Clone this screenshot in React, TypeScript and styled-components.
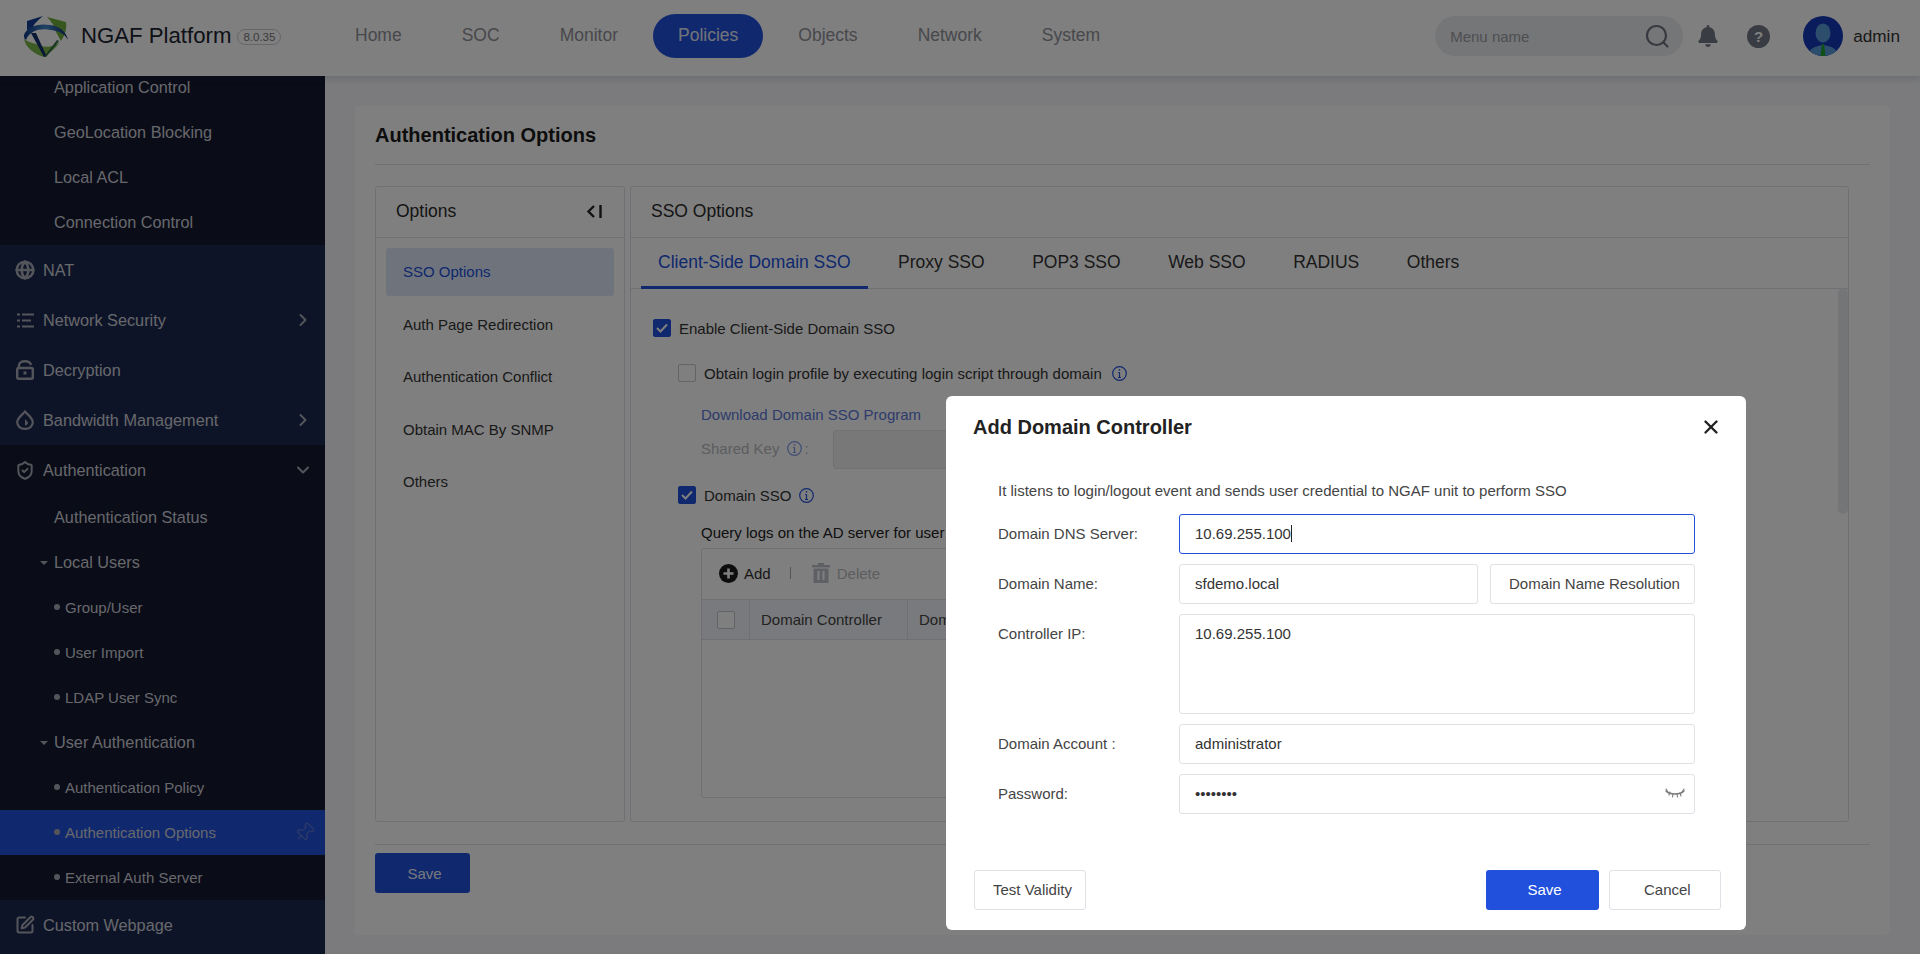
import React from "react";
import styled, { createGlobalStyle } from "styled-components";
import { ChevronDown, ChevronRight, Globe, Pin, ShieldCheck, SquarePen, X } from "lucide-react";
import { FaBell } from "react-icons/fa";

const blue = "#2050dc";
const line = "#dfe1e6";

const GlobalStyle = createGlobalStyle`
  html, body { margin: 0; padding: 0; background: #f6f7fa; }
  * { box-sizing: border-box; }
  body { font-family: "Liberation Sans", Arial, sans-serif; color: #333; }
`;

const Page = styled.div`
  position: relative;
  width: 1920px;
  height: 954px;
  overflow: hidden;
  display: flex;
  flex-direction: column;
`;

/* top bar */
const Header = styled.header`
  position: relative;
  z-index: 2;
  height: 76px;
  flex: none;
  padding-bottom: 4px;
  display: flex;
  align-items: center;
  background: #fff;
  box-shadow: 0 2px 8px rgba(40, 50, 70, 0.18);
`;

const Brand = styled.div`
  width: 330px;
  flex: none;
  padding-left: 23px;
  display: flex;
  align-items: center;
  color: #1c2230;
  font-size: 22.2px;
`;

const BrandName = styled.span`
  margin-left: 12px;
`;

const Version = styled.span`
  margin: 2px 0 0 6px;
  padding: 0 5px;
  height: 16px;
  line-height: 14px;
  border: 1px solid #c9ccd2;
  border-radius: 8px;
  font-size: 11.5px;
  color: #777;
`;

const Nav = styled.nav`
  display: flex;
  gap: 10px;
`;

const NavItem = styled.a<{ $active?: boolean }>`
  height: 44px;
  line-height: 42px;
  padding: 0 25px;
  border-radius: 22px;
  font-size: 17.5px;
  color: ${(p) => (p.$active ? "#e4e8f4" : "#8f9198")};
  background: ${(p) => (p.$active ? blue : "transparent")};
`;

const HeaderRight = styled.div`
  margin-left: auto;
  display: flex;
  align-items: center;
  padding-right: 20px;
`;

const Search = styled.div`
  width: 248px;
  height: 40px;
  border-radius: 20px;
  background: #eaecf0;
  display: flex;
  align-items: center;
  justify-content: space-between;
  padding: 0 14px 0 15px;
  font-size: 15px;
  color: #9c9ea4;
`;

const HelpDot = styled.span`
  width: 23px;
  height: 23px;
  margin-left: 28px;
  margin-right: 33px;
  border-radius: 50%;
  background: #747886;
  color: #fff;
  font-size: 15px;
  font-weight: bold;
  line-height: 23px;
  text-align: center;
`;

const BellBox = styled.span`
  margin-left: 14px;
  display: flex;
  color: #747886;
`;

const AdminName = styled.span`
  margin-left: 10px;
  font-size: 17.2px;
  color: #333;
`;

/* sidebar */
const Body = styled.div`
  flex: 1;
  display: flex;
  min-height: 0;
`;

const Sidebar = styled.aside`
  width: 325px;
  flex: none;
  overflow: hidden;
  background: #1b2850;
`;

const DarkGroup = styled.div<{ $scrolled?: boolean }>`
  background: #141830;
  margin-top: ${(p) => (p.$scrolled ? "-11px" : "0")};
`;

const TopRow = styled.div`
  height: 50px;
  padding: 0 15px;
  display: flex;
  align-items: center;
  font-size: 16.25px;
  color: #cfd1d8;
`;

const RowIcon = styled.span`
  width: 20px;
  margin-right: 8px;
  display: flex;
  justify-content: center;
  color: #a9abb4;
`;

const Chevron = styled.span`
  margin-left: auto;
  margin-right: -3px;
  display: flex;
  color: #a9abb4;
`;

const SubRow = styled.div`
  height: 45px;
  padding-left: 54px;
  display: flex;
  align-items: center;
  font-size: 16.25px;
  color: #cfd1d8;
`;

const Caret = styled.span`
  margin-left: -14px;
  margin-right: 6px;
  width: 0;
  height: 0;
  border-left: 4px solid transparent;
  border-right: 4px solid transparent;
  border-top: 4px solid #a9abb4;
`;

const LeafRow = styled.div<{ $active?: boolean }>`
  position: relative;
  height: 45px;
  padding: 0 10px 1px 54px;
  display: flex;
  align-items: center;
  font-size: 15px;
  color: #cfd1d8;
  background: ${(p) => (p.$active ? blue : "transparent")};
`;

const Dot = styled.span`
  width: 6px;
  height: 6px;
  margin-right: 5px;
  border-radius: 50%;
  background: #a9abb4;
`;

const PinBox = styled.span`
  margin-left: auto;
  display: flex;
  color: #5572d0;
  transform: rotate(45deg);
`;

/* content */
const Main = styled.main`
  flex: 1;
  padding: 30px 30px 19px;
  background: #f6f7fb;
  min-width: 0;
`;

const Card = styled.section`
  height: 100%;
  padding: 0 20px;
  background: #fff;
  border-radius: 4px;
  display: flex;
  flex-direction: column;
`;

const CardTitle = styled.h1`
  margin: 0;
  height: 59px;
  flex: none;
  line-height: 58px;
  font-size: 20px;
  font-weight: bold;
  color: #1a1a1a;
  border-bottom: 1px solid ${line};
`;

const Panels = styled.div`
  height: 636px;
  margin-top: 21px;
  padding-right: 21px;
  flex: none;
  display: flex;
  gap: 5px;
`;

const Panel = styled.div<{ $grow?: boolean }>`
  position: relative;
  width: ${(p) => (p.$grow ? "auto" : "250px")};
  flex: ${(p) => (p.$grow ? "1" : "none")};
  border: 1px solid ${line};
  border-radius: 3px;
  overflow: hidden;
  min-width: 0;
  display: flex;
  flex-direction: column;
`;

const PanelHead = styled.div`
  height: 51px;
  flex: none;
  padding: 0 22px 2px 20px;
  display: flex;
  align-items: center;
  justify-content: space-between;
  font-size: 17.5px;
  color: #2a2a2a;
  border-bottom: 1px solid ${line};
`;

const SideMenu = styled.ul`
  list-style: none;
  margin: 0;
  padding: 10px 10px 0;
`;

const SideItem = styled.li<{ $active?: boolean }>`
  height: 48px;
  margin-bottom: 4.5px;
  padding-left: 17px;
  border-radius: 3px;
  line-height: 48px;
  font-size: 15px;
  color: ${(p) => (p.$active ? blue : "#333")};
  background: ${(p) => (p.$active ? "#dfe8f8" : "transparent")};
`;

const Tabs = styled.div`
  height: 51px;
  flex: none;
  padding-left: 10px;
  display: flex;
  border-bottom: 1px solid ${line};
`;

const Tab = styled.div<{ $active?: boolean }>`
  height: 51px;
  padding: 0 17px;
  margin-right: 13.5px;
  line-height: 49px;
  font-size: 17.5px;
  color: ${(p) => (p.$active ? blue : "#333")};
  border-bottom: 3px solid ${(p) => (p.$active ? blue : "transparent")};
`;

const Scroll = styled.div`
  flex: 1;
  padding: 30px 0 0 22px;
  overflow: hidden;
  font-size: 15px;
  color: #333;
`;

const Thumb = styled.div`
  position: absolute;
  right: 0;
  top: 101px;
  width: 10px;
  height: 226px;
  border-radius: 5px;
  background: #e9ebee;
`;

const CheckLine = styled.div<{ $indent?: boolean; $gap?: number }>`
  display: flex;
  align-items: center;
  height: 18px;
  margin-left: ${(p) => (p.$indent ? "25px" : "0")};
  margin-top: ${(p) => p.$gap ?? 0}px;
  white-space: nowrap;
`;

const Box = styled.span<{ $checked?: boolean }>`
  width: 18px;
  height: 18px;
  flex: none;
  margin-right: 8px;
  border-radius: 2px;
  display: flex;
  align-items: center;
  justify-content: center;
  border: 1px solid ${(p) => (p.$checked ? blue : "#c6c8ce")};
  background: ${(p) => (p.$checked ? blue : "#fff")};
`;

const InfoMark = styled.span<{ $gap?: number }>`
  display: inline-flex;
  margin-left: ${(p) => p.$gap ?? 8}px;
  color: ${blue};
`;

const DownloadLink = styled.a`
  display: block;
  width: 240px;
  height: 22px;
  line-height: 22px;
  margin: 22px 0 0 48px;
  color: #5b78d8;
`;

const SharedRow = styled.div`
  display: flex;
  align-items: center;
  height: 39px;
  padding-bottom: 2px;
  margin: 4px 0 0 48px;
  color: #b8babf;
`;

const SharedColon = styled.span`
  margin-left: 2px;
`;

const DisabledInput = styled.div`
  align-self: flex-start;
  width: 600px;
  height: 39px;
  margin-left: 24px;
  border: 1px solid #e2e3e6;
  border-radius: 3px;
  background: #f0f0f1;
`;

const QueryLine = styled.div`
  height: 20px;
  line-height: 20px;
  margin: 19px 0 0 48px;
  white-space: nowrap;
  color: #222;
`;

const Table = styled.div`
  width: 999px;
  height: 250px;
  margin: 5px 0 0 48px;
  border: 1px solid ${line};
  border-radius: 3px;
`;

const TableTools = styled.div`
  height: 50px;
  padding: 0 0 2px 17px;
  display: flex;
  align-items: center;
`;

const ToolLabel = styled.span<{ $disabled?: boolean }>`
  margin-left: ${(p) => (p.$disabled ? "7px" : "6px")};
  color: ${(p) => (p.$disabled ? "#b8babf" : "#333")};
`;

const ToolSep = styled.span`
  margin: 0 21px 0 19px;
  width: 1px;
  height: 12px;
  background: #aaa;
`;

const TableHead = styled.div`
  height: 41px;
  display: flex;
  align-items: center;
  background: #f2f5fa;
  border-top: 1px solid ${line};
  border-bottom: 1px solid ${line};
  color: #444;
`;

const HeadCell = styled.div<{ $w: number }>`
  width: ${(p) => p.$w}px;
  height: 100%;
  display: flex;
  align-items: center;
  padding-left: 11px;
  border-right: 1px solid ${line};
`;

const BoxCell = styled(HeadCell)`
  padding-left: 15px;
`;

const SaveBar = styled.div`
  margin-top: 22px;
  padding-top: 8px;
  border-top: 1px solid ${line};
`;

const PrimaryButton = styled.button<{ $w: number }>`
  width: ${(p) => p.$w}px;
  height: 40px;
  padding: 0 0 0 4px;
  border: none;
  border-radius: 3px;
  background: ${blue};
  color: #eef1fb;
  font: 15px "Liberation Sans", Arial, sans-serif;
`;

/* dialog */
const Backdrop = styled.div`
  position: absolute;
  inset: 0;
  z-index: 5;
  background: rgba(0, 0, 0, 0.5);
`;

const Dialog = styled.div`
  position: absolute;
  z-index: 6;
  left: 946px;
  top: 396px;
  width: 800px;
  height: 534px;
  background: #fff;
  border-radius: 6px;
  display: flex;
  flex-direction: column;
`;

const DialogHead = styled.div`
  height: 62px;
  flex: none;
  padding: 0 24px 0 27px;
  display: flex;
  align-items: center;
  justify-content: space-between;
  font-size: 20px;
  font-weight: bold;
  color: #222;
`;

const DialogBody = styled.div`
  padding: 22px 51px 0 52px;
  font-size: 15px;
  color: #444;
`;

const Hint = styled.p`
  margin: 0 0 12px;
  height: 22px;
  line-height: 22px;
  white-space: nowrap;
`;

const Form = styled.div`
  display: grid;
  grid-template-columns: 181px 1fr;
  row-gap: 10px;
`;

const Label = styled.label`
  height: 40px;
  line-height: 40px;
`;

const Field = styled.div<{ $focus?: boolean; $tall?: boolean }>`
  position: relative;
  height: ${(p) => (p.$tall ? "100px" : "40px")};
  line-height: 38px;
  padding: 0 15px;
  border: 1px solid ${(p) => (p.$focus ? blue : line)};
  border-radius: 3px;
  color: #333;
  background: #fff;
  flex: 1;
`;

const FieldPair = styled.div`
  display: flex;
  gap: 12px;
`;

const OutlineButton = styled.button<{ $w: number; $pad?: number }>`
  width: ${(p) => p.$w}px;
  height: 40px;
  flex: none;
  padding: 0 0 2px ${(p) => p.$pad ?? 0}px;
  text-align: left;
  border: 1px solid ${line};
  border-radius: 3px;
  background: #fff;
  color: #444;
  font: 15px "Liberation Sans", Arial, sans-serif;
`;

const TextCaret = styled.span`
  display: inline-block;
  width: 1px;
  height: 17px;
  vertical-align: -3px;
  background: #222;
`;

const EyeBox = styled.span`
  position: absolute;
  right: 9px;
  top: 13px;
  display: flex;
`;

const DialogFoot = styled.div`
  margin-top: 56px;
  padding: 0 25px 0 28px;
  display: flex;
  align-items: center;
  gap: 10px;
`;

const FootSave = styled(PrimaryButton)`
  margin-left: auto;
  padding: 0 0 2px 4px;
  color: #fff;
`;

const Logo = () => (
  <svg width="46" height="43" viewBox="0 0 46 43">
    <defs>
      <linearGradient id="logoBand" x1="0" x2="1" y1="0" y2="0">
        <stop offset="0" stopColor="#123a86" />
        <stop offset="0.5" stopColor="#3f86c8" />
        <stop offset="1" stopColor="#103070" />
      </linearGradient>
    </defs>
    <path d="M24 2 L43 7 C44 14 42 20 38 26 L33 17 C32 12 29 7 24 2Z" fill="#6fae3c" />
    <path d="M1 24 C3 33 11 39 21 42 C27 38 33 33 37 27 C29 33 20 33 13 29 C8 28 4 26 1 24Z" fill="#7ab648" />
    <path d="M8 18 L21 42 L23 40 L13 18Z" fill="#12306c" />
    <path d="M21 42 L34 25 L36 26 L23 42Z" fill="#2f6a4a" />
    <path d="M4 6 L20 1 C15 5 11 9 10 12 L4 15Z" fill="#143c96" />
    <path d="M1 20 C4 11 16 8 27 10 C36 11 43 16 45 25 C42 19 36 16 28 15 C18 13 7 15 3 25 C1 24 1 22 1 20Z" fill="url(#logoBand)" />
  </svg>
);

const SearchIcon = () => (
  <svg width="24" height="24" viewBox="0 0 24 24" fill="none" stroke="#6f7380" strokeWidth="2.2" strokeLinecap="round">
    <circle cx="11.5" cy="11.5" r="9.5" />
    <path d="M18.5 18.5 L22.5 22.5" />
  </svg>
);

const Avatar = () => (
  <svg width="40" height="40" viewBox="0 0 40 40">
    <clipPath id="avatarClip">
      <circle cx="20" cy="20" r="20" />
    </clipPath>
    <g clipPath="url(#avatarClip)">
      <rect width="40" height="40" fill="#1438b8" />
      <path d="M5 40 C5 33 12 30 20 29 C28 30 35 33 35 40Z" fill="#5a9bd8" />
      <ellipse cx="20" cy="17" rx="7.5" ry="9.5" fill="#5a9bd8" />
      <path d="M19 28 H21 L22.5 40 H17.5Z" fill="#1ea02e" />
    </g>
  </svg>
);

const ListIcon = () => (
  <svg width="17" height="15" viewBox="0 0 17 15" fill="#a9abb4">
    <rect x="0" y="0.5" width="3" height="2" />
    <rect x="5" y="0.5" width="12" height="2" />
    <rect x="0" y="6.5" width="3" height="2" />
    <rect x="5" y="6.5" width="9" height="2" />
    <rect x="0" y="12.5" width="3" height="2" />
    <rect x="5" y="12.5" width="12" height="2" />
  </svg>
);

const LockIcon = () => (
  <svg width="18" height="20" viewBox="0 0 18 20" fill="none" stroke="#a9abb4" strokeWidth="2.4">
    <path d="M3 8 V5.5 C3 2.5 6 1.2 9 1.2 C12 1.2 14.5 2.5 15 5" />
    <rect x="1.2" y="8" width="15.6" height="10.8" rx="1.5" />
    <rect x="8" y="12" width="2" height="2" fill="#a9abb4" strokeWidth="1" />
  </svg>
);

const DropIcon = () => (
  <svg width="18" height="20" viewBox="0 0 18 20" fill="none" stroke="#a9abb4" strokeWidth="2.2">
    <path d="M9 1.5 C12 5 16.8 8 16.8 12.2 C16.8 16.2 13.4 18.9 9 18.9 C4.6 18.9 1.2 16.2 1.2 12.2 C1.2 8 6 5 9 1.5Z" />
    <path d="M9 9 C10 10.5 12 11.5 12 13 C12 14.5 10.5 15.5 9 15.5Z" fill="#a9abb4" stroke="none" />
  </svg>
);

const CheckMark = () => (
  <svg width="12" height="10" viewBox="0 0 12 10" fill="none" stroke="#fff" strokeWidth="2">
    <path d="M1 5 L4.5 8.5 L11 1.5" />
  </svg>
);

const InfoIcon = ({ color = blue }: { color?: string }) => (
  <svg width="15" height="15" viewBox="0 0 15 15" fill="none" stroke={color} strokeWidth="1.2">
    <circle cx="7.5" cy="7.5" r="6.8" />
    <path d="M7.5 6.5 V11.5 M6 6.5 H7.5 M6 11.5 H9" />
    <circle cx="7.5" cy="3.9" r="0.8" fill={color} stroke="none" />
  </svg>
);

const CollapseIcon = () => (
  <svg width="16" height="15" viewBox="0 0 16 15" fill="none" stroke="#222" strokeWidth="2.4">
    <path d="M8 2 L2.5 7.5 L8 13" />
    <path d="M14.5 1 V14" />
  </svg>
);

const AddIcon = () => (
  <svg width="19" height="19" viewBox="0 0 19 19">
    <circle cx="9.5" cy="9.5" r="9.5" fill="#1a1a1a" />
    <path d="M9.5 4.5 V14.5 M4.5 9.5 H14.5" stroke="#fff" strokeWidth="2.6" />
  </svg>
);

const TrashIcon = () => (
  <svg width="18" height="20" viewBox="0 0 18 20" fill="#bfc1c6">
    <rect x="6" y="0" width="6" height="2" />
    <rect x="0" y="2" width="18" height="2.4" />
    <path d="M1.5 5.5 H16.5 V20 H1.5Z M5.5 8 V17 H7.5 V8Z M10.5 8 V17 H12.5 V8Z" fillRule="evenodd" />
  </svg>
);

const EyeClosed = () => (
  <svg width="20" height="12" viewBox="0 0 20 12" fill="none" stroke="#777" strokeWidth="1.1" strokeLinecap="round">
    <path d="M1 3 C5 7 15 7 19 3" strokeWidth="1.5" />
    <path d="M1 1 L3 4 M5 4 L4 7 M8 6 L7.5 9 M12 6 L12.5 9 M15 5 L16 8 M17 4 L19 1" />
  </svg>
);

const navItems = ["Home", "SOC", "Monitor", "Policies", "Objects", "Network", "System"];
const optionItems = ["SSO Options", "Auth Page Redirection", "Authentication Conflict", "Obtain MAC By SNMP", "Others"];
const tabItems = ["Client-Side Domain SSO", "Proxy SSO", "POP3 SSO", "Web SSO", "RADIUS", "Others"];

export default function App() {
  return (
    <Page>
      <GlobalStyle />
      <Header>
        <Brand>
          <Logo />
          <BrandName>NGAF Platform</BrandName>
          <Version>8.0.35</Version>
        </Brand>
        <Nav>
          {navItems.map((n) => (
            <NavItem key={n} $active={n === "Policies"}>
              {n}
            </NavItem>
          ))}
        </Nav>
        <HeaderRight>
          <Search>
            Menu name
            <SearchIcon />
          </Search>
          <BellBox>
            <FaBell size={22} />
          </BellBox>
          <HelpDot>?</HelpDot>
          <Avatar />
          <AdminName>admin</AdminName>
        </HeaderRight>
      </Header>
      <Body>
        <Sidebar>
          <DarkGroup $scrolled>
            <SubRow>Application Control</SubRow>
            <SubRow>GeoLocation Blocking</SubRow>
            <SubRow>Local ACL</SubRow>
            <SubRow>Connection Control</SubRow>
          </DarkGroup>
          <TopRow>
            <RowIcon><Globe size={20} strokeWidth={3} /></RowIcon>
            NAT
          </TopRow>
          <TopRow>
            <RowIcon><ListIcon /></RowIcon>
            Network Security
            <Chevron><ChevronRight size={20} strokeWidth={2.4} /></Chevron>
          </TopRow>
          <TopRow>
            <RowIcon><LockIcon /></RowIcon>
            Decryption
          </TopRow>
          <TopRow>
            <RowIcon><DropIcon /></RowIcon>
            Bandwidth Management
            <Chevron><ChevronRight size={20} strokeWidth={2.4} /></Chevron>
          </TopRow>
          <DarkGroup>
            <TopRow>
              <RowIcon><ShieldCheck size={21} strokeWidth={2.4} /></RowIcon>
              Authentication
              <Chevron><ChevronDown size={20} strokeWidth={2.4} /></Chevron>
            </TopRow>
            <SubRow>Authentication Status</SubRow>
            <SubRow><Caret />Local Users</SubRow>
            <LeafRow><Dot />Group/User</LeafRow>
            <LeafRow><Dot />User Import</LeafRow>
            <LeafRow><Dot />LDAP User Sync</LeafRow>
            <SubRow><Caret />User Authentication</SubRow>
            <LeafRow><Dot />Authentication Policy</LeafRow>
            <LeafRow $active>
              <Dot />
              Authentication Options
              <PinBox><Pin size={21} strokeWidth={1.6} /></PinBox>
            </LeafRow>
            <LeafRow><Dot />External Auth Server</LeafRow>
          </DarkGroup>
          <TopRow>
            <RowIcon><SquarePen size={20} strokeWidth={2.4} /></RowIcon>
            Custom Webpage
          </TopRow>
        </Sidebar>
        <Main>
          <Card>
            <CardTitle>Authentication Options</CardTitle>
            <Panels>
              <Panel>
                <PanelHead>
                  Options
                  <CollapseIcon />
                </PanelHead>
                <SideMenu>
                  {optionItems.map((o) => (
                    <SideItem key={o} $active={o === "SSO Options"}>
                      {o}
                    </SideItem>
                  ))}
                </SideMenu>
              </Panel>
              <Panel $grow>
                <PanelHead>SSO Options</PanelHead>
                <Tabs>
                  {tabItems.map((t) => (
                    <Tab key={t} $active={t === tabItems[0]}>
                      {t}
                    </Tab>
                  ))}
                </Tabs>
                <Scroll>
                  <CheckLine>
                    <Box $checked><CheckMark /></Box>
                    Enable Client-Side Domain SSO
                  </CheckLine>
                  <CheckLine $indent $gap={27}>
                    <Box />
                    Obtain login profile by executing login script through domain
                    <InfoMark $gap={10}><InfoIcon /></InfoMark>
                  </CheckLine>
                  <DownloadLink>Download Domain SSO Program</DownloadLink>
                  <SharedRow>
                    Shared Key
                    <InfoMark><InfoIcon color="#7f97e6" /></InfoMark>
                    <SharedColon>:</SharedColon>
                    <DisabledInput />
                  </SharedRow>
                  <CheckLine $indent $gap={17}>
                    <Box $checked><CheckMark /></Box>
                    Domain SSO
                    <InfoMark $gap={7}><InfoIcon /></InfoMark>
                  </CheckLine>
                  <QueryLine>Query logs on the AD server for user</QueryLine>
                  <Table>
                    <TableTools>
                      <AddIcon />
                      <ToolLabel>Add</ToolLabel>
                      <ToolSep />
                      <TrashIcon />
                      <ToolLabel $disabled>Delete</ToolLabel>
                    </TableTools>
                    <TableHead>
                      <BoxCell $w={48}><Box /></BoxCell>
                      <HeadCell $w={158}>Domain Controller</HeadCell>
                      <HeadCell $w={200}>Domain Name</HeadCell>
                    </TableHead>
                  </Table>
                </Scroll>
                <Thumb />
              </Panel>
            </Panels>
            <SaveBar>
              <PrimaryButton $w={95}>Save</PrimaryButton>
            </SaveBar>
          </Card>
        </Main>
      </Body>

      <Backdrop />
      <Dialog>
        <DialogHead>
          Add Domain Controller
          <X size={22} strokeWidth={2.6} color="#222" />
        </DialogHead>
        <DialogBody>
          <Hint>It listens to login/logout event and sends user credential to NGAF unit to perform SSO</Hint>
          <Form>
            <Label>Domain DNS Server:</Label>
            <Field $focus>10.69.255.100<TextCaret /></Field>
            <Label>Domain Name:</Label>
            <FieldPair>
              <Field>sfdemo.local</Field>
              <OutlineButton $w={205} $pad={18}>Domain Name Resolution</OutlineButton>
            </FieldPair>
            <Label>Controller IP:</Label>
            <Field $tall>10.69.255.100</Field>
            <Label>Domain Account :</Label>
            <Field>administrator</Field>
            <Label>Password:</Label>
            <Field>
              ••••••••
              <EyeBox><EyeClosed /></EyeBox>
            </Field>
          </Form>
        </DialogBody>
        <DialogFoot>
          <OutlineButton $w={112} $pad={18}>Test Validity</OutlineButton>
          <FootSave $w={113}>Save</FootSave>
          <OutlineButton $w={112} $pad={34}>Cancel</OutlineButton>
        </DialogFoot>
      </Dialog>
    </Page>
  );
}
